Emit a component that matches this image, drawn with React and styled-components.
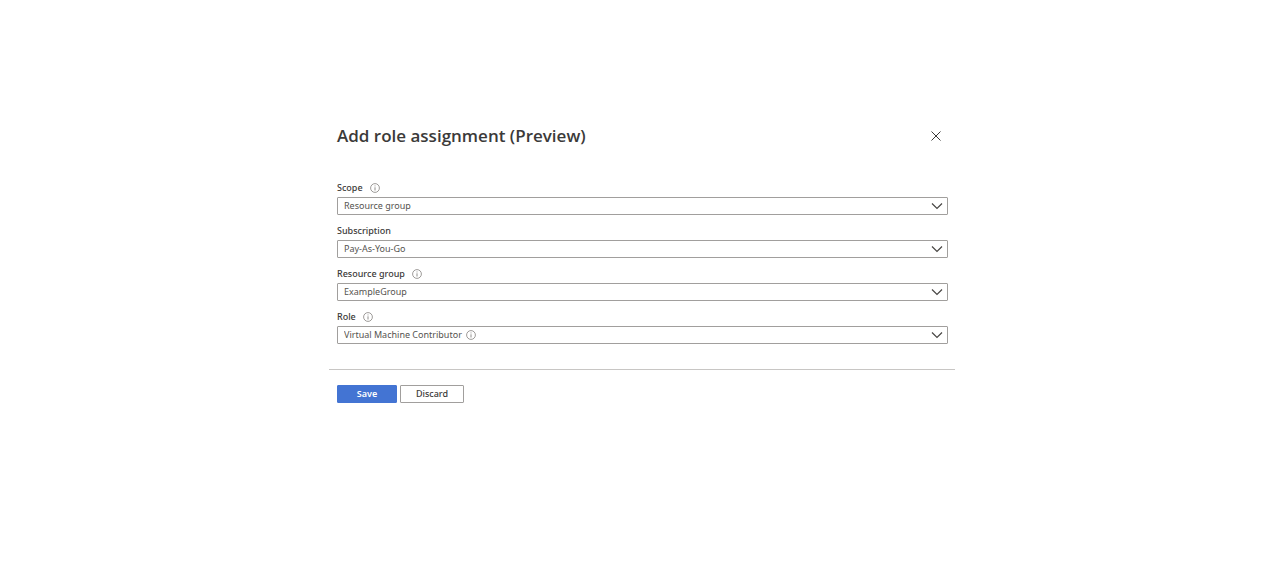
import React from "react";
import styled, { createGlobalStyle } from "styled-components";

const GlobalStyle = createGlobalStyle`
  *, *::before, *::after { box-sizing: border-box; }
  body {
    margin: 0;
    background: #fff;
    color: #3b3a39;
    font-family: "Noto Sans", "Open Sans", sans-serif;
    font-size: 9px;
    line-height: 16px;
  }
`;

const Panel = styled.main`
  width: 100%;
  max-width: 626px;
  margin: 0 auto;
  padding: 120px 0 32px;
`;

const Header = styled.header`
  display: flex;
  align-items: center;
  justify-content: space-between;
  padding: 0 11px 0 8px;
  margin-bottom: 28px;
`;

const Title = styled.h1`
  margin: 0;
  font-family: "Open Sans", "Noto Sans", sans-serif;
  font-size: 17px;
  font-weight: 600;
  line-height: 32px;
`;

const CloseButton = styled.button`
  display: flex;
  padding: 3px;
  border: 0;
  background: none;
  color: #3b3a39;
  cursor: pointer;
`;

const Fields = styled.div`
  padding: 0 7px 0 8px;
`;

const Field = styled.div`
  display: flex;
  flex-direction: column;
  margin-bottom: 8px;
`;

const LabelRow = styled.div`
  display: flex;
  align-items: center;
  gap: 7px;
  height: 16px;
  margin-bottom: 1px;
`;

const Label = styled.label`
  font-weight: 500;
`;

const SelectBox = styled.div`
  position: relative;
  display: flex;
`;

const Select = styled.select`
  appearance: none;
  width: 100%;
  height: 18px;
  padding: 0 24px 0 6px;
  border: 1px solid #a19f9d;
  border-radius: 1px;
  background: #fff;
  color: #55534f;
  font: inherit;
  line-height: 16px;
`;

const Chevron = styled.svg`
  position: absolute;
  top: 3px;
  right: 5px;
  pointer-events: none;
`;

const ValueInfo = styled.span`
  position: absolute;
  top: 4px;
  left: 129px;
  display: flex;
  pointer-events: none;
`;

const Footer = styled.footer`
  display: flex;
  gap: 3px;
  margin-top: 25px;
  padding: 15px 8px 0;
  border-top: 1px solid #c8c6c4;
`;

const Button = styled.button`
  width: ${(p) => (p.$primary ? 60 : 64)}px;
  height: 18px;
  padding: 0;
  border: 1px solid ${(p) => (p.$primary ? "#4374d3" : "#a19f9d")};
  border-radius: 1px;
  background: ${(p) => (p.$primary ? "#4374d3" : "#fff")};
  color: ${(p) => (p.$primary ? "#fff" : "#3b3a39")};
  font: inherit;
  font-weight: ${(p) => (p.$primary ? 600 : 500)};
  line-height: 16px;
  cursor: pointer;
`;

function InfoIcon() {
  return (
    <svg width="10" height="10" viewBox="0 0 10 10" fill="none" stroke="#85827f" aria-hidden="true">
      <circle cx="5" cy="5" r="4.4" strokeWidth="0.8" />
      <path d="M5 4.3V7.5M5 2.5V3.4" strokeWidth="0.9" />
    </svg>
  );
}

const fields = [
  { id: "scope", label: "Scope", value: "Resource group", info: true },
  { id: "subscription", label: "Subscription", value: "Pay-As-You-Go" },
  { id: "resource-group", label: "Resource group", value: "ExampleGroup", info: true },
  { id: "role", label: "Role", value: "Virtual Machine Contributor", info: true, valueInfo: true },
];

export default function App() {
  return (
    <>
      <GlobalStyle />
      <Panel>
        <Header>
          <Title>Add role assignment (Preview)</Title>
          <CloseButton type="button" aria-label="Close">
            <svg width="10" height="10" viewBox="0 0 10 10" fill="none" stroke="currentColor" strokeWidth="1">
              <path d="M0.5 0.5L9.5 9.5M9.5 0.5L0.5 9.5" />
            </svg>
          </CloseButton>
        </Header>
        <form onSubmit={(e) => e.preventDefault()}>
          <Fields>
            {fields.map((f) => (
              <Field key={f.id}>
                <LabelRow>
                  <Label htmlFor={f.id}>{f.label}</Label>
                  {f.info && <InfoIcon />}
                </LabelRow>
                <SelectBox>
                  <Select id={f.id} defaultValue={f.value}>
                    <option>{f.value}</option>
                  </Select>
                  {f.valueInfo && (
                    <ValueInfo>
                      <InfoIcon />
                    </ValueInfo>
                  )}
                  <Chevron width="12" height="12" viewBox="0 0 12 12" fill="none" stroke="#484644" strokeWidth="1.2" aria-hidden="true">
                    <path d="M1 3.5L6 8.5L11 3.5" />
                  </Chevron>
                </SelectBox>
              </Field>
            ))}
          </Fields>
          <Footer>
            <Button type="submit" $primary>Save</Button>
            <Button type="button">Discard</Button>
          </Footer>
        </form>
      </Panel>
    </>
  );
}
